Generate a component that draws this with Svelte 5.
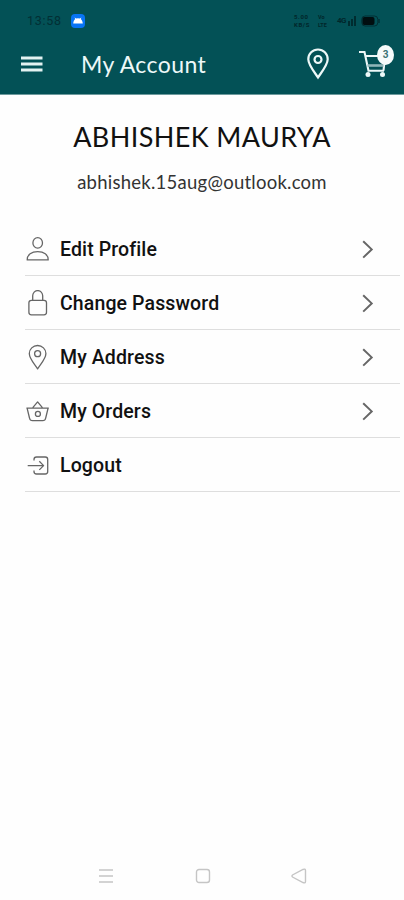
<script lang="ts">
	type Item = { label: string; icon: string; link: boolean };

	const items: Item[] = [
		{ label: 'Edit Profile', icon: 'user', link: true },
		{ label: 'Change Password', icon: 'lock', link: true },
		{ label: 'My Address', icon: 'pin', link: true },
		{ label: 'My Orders', icon: 'basket', link: true },
		{ label: 'Logout', icon: 'logout', link: false }
	];

	let name = $state('ABHISHEK MAURYA');
	let email = $state('abhishek.15aug@outlook.com');
	let cartCount = $state(3);
</script>

<div class="screen">
	<header>
		<div class="status">
			<span class="time">13:58</span>
			<svg class="app-badge" width="14" height="14" viewBox="0 0 14 14">
				<rect width="14" height="14" rx="4" fill="#0874f4" />
				<path d="M2.2 9.5C2.4 7.5 3.2 6 4.3 5.1L3.5 3.6l1.9.9a5 5 0 0 1 3.2 0l1.9-.9-.8 1.5c1.1.9 1.9 2.4 2.1 4.4z" fill="#fff" />
			</svg>
			<div class="indicators">
				<span class="tiny rate"><span>5.00</span><span>KB/S</span></span>
				<span class="tiny volte"><span>Vo</span><span>LTE</span></span>
				<span class="tiny net">4G</span>
				<svg class="signal" width="8" height="12" viewBox="0 0 8 12">
					<path d="M1 6v5M4 4v7M7 1v10" stroke="#01262a" stroke-width="1.7" />
				</svg>
				<svg class="battery" width="19" height="12" viewBox="0 0 19 12">
					<rect x=".8" y="1" width="16" height="10" rx="3.3" fill="none" stroke="#022f34" stroke-width="1" />
					<rect x="1.5" y="2" width="12" height="8" rx="2" fill="#010e10" />
					<path d="M18 4v4" stroke="#022f34" stroke-width="1.4" />
				</svg>
			</div>
		</div>
		<div class="toolbar">
			<button type="button" class="menu" aria-label="Menu">
				<svg width="22" height="16" viewBox="0 0 22 16">
					<path d="M0 2h21.5M0 8h21.5M0 14h21.5" stroke="#e3f2f1" stroke-width="2.9" />
				</svg>
			</button>
			<h1>My Account</h1>
			<button type="button" class="stores" aria-label="Stores">
				<svg width="24" height="32" viewBox="0 0 24 32" fill="none" stroke="#edf8f8">
					<path d="M12 29.5C9.5 25.5 2.3 17 2.3 11.2a9.7 9.7 0 0 1 19.4 0C21.7 17 14.5 25.5 12 29.5z" stroke-width="2.2" />
					<circle cx="12" cy="11.5" r="3.5" stroke-width="2.2" />
				</svg>
			</button>
			<button type="button" class="cart" aria-label="Cart">
				<svg width="28" height="28" viewBox="0 0 28 28" fill="none" stroke="#edf8f8" stroke-width="2.1">
					<path d="M0 2h5.5L9.5 20.7H25M6.6 6H26L24.5 20.7" />
					<path d="M8.5 15.5h16" stroke="#8fb5b8" stroke-width="2.6" />
					<circle cx="9" cy="24.5" r="2.5" fill="#edf8f8" stroke="none" />
					<circle cx="23.5" cy="24.5" r="2.5" fill="#edf8f8" stroke="none" />
				</svg>
				<span class="count">{cartCount}</span>
			</button>
		</div>
	</header>

	<main>
		<section class="profile">
			<h2>{name}</h2>
			<p>{email}</p>
		</section>

		<ul>
			{#each items as item (item.label)}
				<li>
					<svg class="icon" width="26" height="28" viewBox="0 0 26 28">
						{#if item.icon === 'user'}
							<ellipse cx="12.7" cy="6.9" rx="4.8" ry="5.3" />
							<path d="M2.2 23.9c0-5.4 4.4-8.2 10.5-8.2s10.5 2.8 10.5 8.2z" />
						{:else if item.icon === 'lock'}
							<rect x="3.9" y="10.3" width="17.6" height="14.5" rx="2.5" />
							<path d="M7.7 10V5.8a5 5.2 0 0 1 10 0V10" />
						{:else if item.icon === 'pin'}
							<path d="M12.6 24.9C10.3 20.8 4.3 15 4.3 9.5a8.3 8 0 0 1 16.6 0C20.9 15 14.9 20.8 12.6 24.900z" />
							<circle cx="12.6" cy="9.7" r="3" />
						{:else if item.icon === 'basket'}
							<path d="M1.400 10.200h22.400M2.100 10.200l2.400 9.800q.5 2.700 3 2.700h10.200q2.500 0 3-2.700l2.400-9.800M7.800 9.700l4.800-5.800L17.400 9.700" />
							<circle cx="12.900" cy="15.900" r="2.500" />
						{:else}
							<path d="M9 8.500V7.500Q9 5 11.500 5h8.800Q22.700 5 22.700 7.500v12q0 2.500-2.500 2.500h-8.700Q9 22 9 19.500v-1M2.700 13.600h15.800M14.300 9.300l4.300 4.300-4.300 4.300" />
						{/if}
					</svg>
					<span class="label">{item.label}</span>
					{#if item.link}
						<svg class="chevron" width="12" height="20" viewBox="0 0 12 20">
							<path d="M1.200 1.200L9.700 9.400l-8.500 8.200" />
						</svg>
					{/if}
				</li>
			{/each}
		</ul>
	</main>

	<nav>
		<svg width="16" height="16" viewBox="0 0 16 16">
			<path d="M1 2h14M1 8h14M1 14h14" />
		</svg>
		<svg width="16" height="16" viewBox="0 0 16 16">
			<rect x="1.5" y="1.5" width="13" height="13" rx="2.5" />
		</svg>
		<svg width="16" height="16" viewBox="0 0 16 16">
			<path d="M1.5 7q-1 1 0 2l10.500 5.500q2.500 1 2.500-1v-11q0-2-2.500-1z" />
		</svg>
	</nav>
</div>

<style>
	:global(body) {
		background: #fefefe;
	}

	.screen {
		display: flex;
		flex-direction: column;
		height: 900px;
		overflow: hidden;
		background: #fefefe;
		color: #111;
		font-family: Lato, sans-serif;
	}

	header {
		box-sizing: border-box;
		height: 95px;
		background: #035156;
		border-bottom: 1px solid #6d9a9d;
	}

	.status {
		display: flex;
		align-items: center;
		height: 41px;
		padding: 0 24px 0 27px;
		color: #022f34;
	}

	.time {
		width: 44px;
		font: 12.5px/14px Roboto, sans-serif;
		letter-spacing: 0.7px;
	}

	.indicators {
		display: flex;
		align-items: center;
		margin-left: auto;
	}

	.tiny {
		display: flex;
		flex-direction: column;
		font: 700 6px/8px Roboto, sans-serif;
		color: #01262a;
	}

	.rate {
		width: 24px;
		letter-spacing: 0.6px;
	}

	.volte {
		width: 19px;
		font-size: 5.5px;
	}

	.net {
		width: 11px;
		font-size: 8px;
		line-height: 12px;
		letter-spacing: -0.5px;
	}

	.battery {
		margin-left: 5px;
	}

	.toolbar {
		display: flex;
		align-items: center;
		height: 46px;
		padding: 0 17px 0 21px;
	}

	button {
		position: relative;
		padding: 0;
		border: 0;
		background: none;
		font: inherit;
		color: inherit;
	}

	button svg,
	.status svg {
		display: block;
	}

	.menu {
		width: 60px;
	}

	h1 {
		flex: 1;
		margin: 0;
		color: #edf8f8;
		font-size: 23px;
		font-weight: 400;
		line-height: 28px;
		letter-spacing: 0.4px;
	}

	.stores {
		margin-right: 29px;
	}

	.count {
		position: absolute;
		top: -5px;
		right: -7px;
		width: 17px;
		height: 20px;
		border-radius: 50%;
		background: #f5fbfb;
		color: #397273;
		font: 700 10px/20px Roboto, sans-serif;
		text-align: center;
	}

	.profile {
		padding-top: 24px;
		text-align: center;
	}

	h2 {
		margin: 0;
		font-size: 27px;
		font-weight: 400;
		line-height: 36px;
		letter-spacing: 0.4px;
	}

	p {
		margin: 14px 0 0;
		font-size: 18.5px;
		line-height: 26px;
		letter-spacing: 0.25px;
		color: #333;
	}

	ul {
		margin: 27px 4px 0 25px;
		padding: 0;
		list-style: none;
	}

	li {
		display: flex;
		align-items: center;
		box-sizing: border-box;
		height: 54px;
		padding: 2px 26px 0 0;
		border-bottom: 1px solid #dedede;
	}

	.icon {
		margin-right: 9px;
		fill: none;
		stroke: #666;
		stroke-width: 1.3;
		stroke-linejoin: round;
	}

	.label {
		flex: 1;
		font: 500 19.5px/24px Roboto, sans-serif;
		letter-spacing: 0.12px;
	}

	.chevron {
		fill: none;
		stroke: #666;
		stroke-width: 2;
	}

	nav {
		display: flex;
		justify-content: space-between;
		margin-top: auto;
		padding: 0 97px 16px 98px;
	}

	nav svg {
		fill: none;
		stroke: #c5c5c5;
		stroke-width: 1.4;
	}
</style>
